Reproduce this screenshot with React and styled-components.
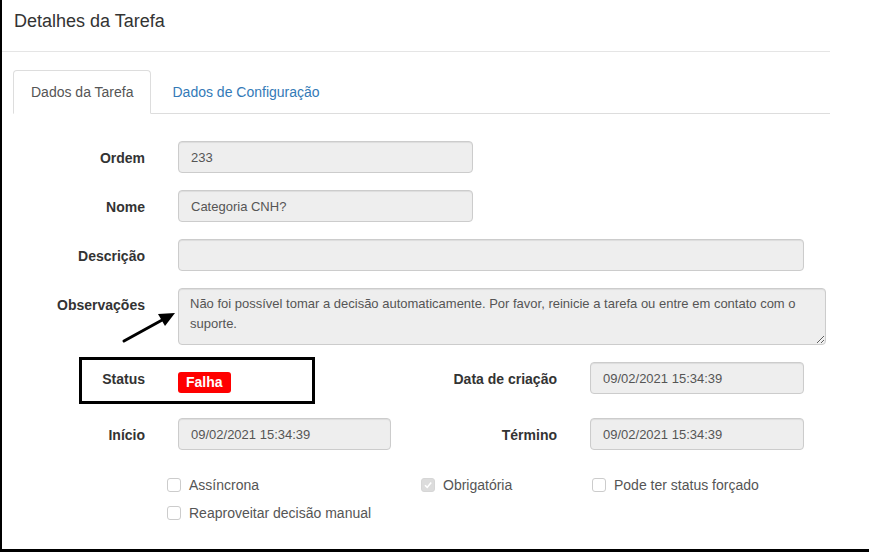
import React from 'react'
import styled, { createGlobalStyle } from 'styled-components'

const GlobalStyle = createGlobalStyle`
    html, body {
        margin: 0;
        padding: 0;
        background: #fff;
    }
    * {
        box-sizing: border-box;
    }
`

const Screen = styled.div`
    position: relative;
    width: 869px;
    height: 552px;
    border-left: 2px solid #000;
    border-bottom: 3px solid #000;
    font-family: "Liberation Sans", Arial, sans-serif;
    font-size: 14px;
    color: #333;
    overflow: hidden;
`

const Panel = styled.div`
    width: 828px;
`

const Header = styled.div`
    padding: 11px 12px 20px;
    border-bottom: 1px solid #e5e5e5;
`

const Title = styled.h4`
    margin: 0;
    font-size: 18px;
    line-height: 20px;
    font-weight: normal;
    color: #333;
`

const Tabs = styled.ul`
    display: flex;
    list-style: none;
    margin: 18px 0 0 11px;
    padding: 0;
    border-bottom: 1px solid #ddd;
`

const Tab = styled.li`
    margin-right: 3px;
    margin-bottom: -1px;
    padding: 11px 17px 11px;
    line-height: 20px;
    border: 1px solid ${({ active }) => (active ? '#ddd' : 'transparent')};
    border-bottom-color: ${({ active }) => (active ? '#fff' : 'transparent')};
    border-radius: 4px 4px 0 0;
    background: ${({ active }) => (active ? '#fff' : 'transparent')};
    color: ${({ active }) => (active ? '#555' : '#337ab7')};
`

const Form = styled.div`
    padding-top: 27px;
`

const Row = styled.div`
    display: grid;
    grid-template-columns: 143px 1fr;
    column-gap: 33px;
    margin-bottom: ${({ gap }) => gap ?? 17}px;
`

const SplitRow = styled.div`
    display: grid;
    grid-template-columns: 143px 213px 133px 214px;
    column-gap: 33px;
    margin-bottom: ${({ gap }) => gap ?? 17}px;
`

const Label = styled.label`
    text-align: right;
    font-weight: bold;
    line-height: 20px;
    padding-top: 7px;
    color: #333;
`

const Field = styled.div`
    width: ${({ w }) => (w ? `${w}px` : '100%')};
    height: 32px;
    padding: 6px 12px;
    background: #eee;
    border: 1px solid #ccc;
    border-radius: 4px;
    box-shadow: inset 0 1px 1px rgba(0, 0, 0, 0.075);
    font-size: 13px;
    line-height: 19px;
    color: #555;
`

const TextArea = styled.textarea`
    display: block;
    width: 648px;
    height: 57px;
    padding: 5px 11px;
    background: #eee;
    border: 1px solid #ccc;
    border-radius: 4px;
    box-shadow: inset 0 1px 1px rgba(0, 0, 0, 0.075);
    font-family: "Liberation Sans", Arial, sans-serif;
    font-size: 13px;
    line-height: 20px;
    color: #555;
    resize: both;
    outline: none;
`

const StatusCell = styled.div`
    padding-top: 10px;
`

const Badge = styled.span`
    display: inline-block;
    padding: 3px 8px 3px;
    border-radius: 3px;
    background: #ff0000;
    color: #fff;
    font-weight: bold;
    font-size: 14px;
    line-height: 15px;
`

const Checks = styled.div`
    display: grid;
    grid-template-columns: 254px 171px auto;
    row-gap: 8px;
    margin: 25px 0 0 165px;
`

const Check = styled.div`
    display: flex;
    align-items: center;
    gap: 8px;
    line-height: 20px;
    color: #555;
`

const Box = styled.span`
    display: inline-flex;
    align-items: center;
    justify-content: center;
    width: 14px;
    height: 14px;
    border: 1px solid ${({ checked }) => (checked ? '#d6d6d6' : '#ccc')};
    border-radius: 3px;
    background: ${({ checked }) => (checked ? '#dcdcdc' : '#fff')};
`

const Highlight = styled.div`
    position: absolute;
    left: 77px;
    top: 357px;
    width: 236px;
    height: 47px;
    border: 3px solid #000;
    pointer-events: none;
`

const Arrow = styled.svg`
    position: absolute;
    left: 118px;
    top: 308px;
    pointer-events: none;
`

const CheckItem = ({ label, checked }) => (
    <Check>
        <Box checked={checked}>
            {checked && (
                <svg width="10" height="10" viewBox="0 0 10 10">
                    <path d="M2 5.2 L4.2 7.4 L8.2 2.6" fill="none" stroke="#fff" strokeWidth="1.6" />
                </svg>
            )}
        </Box>
        {label}
    </Check>
)

const App = () => {
    return (
        <>
            <GlobalStyle />
            <Screen>
                <Panel>
                    <Header>
                        <Title>Detalhes da Tarefa</Title>
                    </Header>
                    <Tabs>
                        <Tab active>Dados da Tarefa</Tab>
                        <Tab>Dados de Configuração</Tab>
                    </Tabs>
                    <Form>
                        <Row>
                            <Label>Ordem</Label>
                            <Field w={295}>233</Field>
                        </Row>
                        <Row>
                            <Label>Nome</Label>
                            <Field w={295}>Categoria CNH?</Field>
                        </Row>
                        <Row>
                            <Label>Descrição</Label>
                            <Field w={626} />
                        </Row>
                        <Row>
                            <Label>Observações</Label>
                            <TextArea
                                readOnly
                                value="Não foi possível tomar a decisão automaticamente. Por favor, reinicie a tarefa ou entre em contato com o suporte."
                            />
                        </Row>
                        <SplitRow gap={24}>
                            <Label>Status</Label>
                            <StatusCell>
                                <Badge>Falha</Badge>
                            </StatusCell>
                            <Label>Data de criação</Label>
                            <Field>09/02/2021 15:34:39</Field>
                        </SplitRow>
                        <SplitRow gap={0}>
                            <Label>Início</Label>
                            <Field>09/02/2021 15:34:39</Field>
                            <Label>Término</Label>
                            <Field>09/02/2021 15:34:39</Field>
                        </SplitRow>
                        <Checks>
                            <CheckItem label="Assíncrona" />
                            <CheckItem label="Obrigatória" checked />
                            <CheckItem label="Pode ter status forçado" />
                            <CheckItem label="Reaproveitar decisão manual" />
                        </Checks>
                    </Form>
                </Panel>
                <Highlight />
                <Arrow width="60" height="40" viewBox="0 0 60 40">
                    <line x1="4" y1="33" x2="44" y2="11" stroke="#000" strokeWidth="3" strokeLinecap="round" />
                    <polygon points="55,5 38,6 45,18" fill="#000" />
                </Arrow>
            </Screen>
        </>
    )
}

export default App
